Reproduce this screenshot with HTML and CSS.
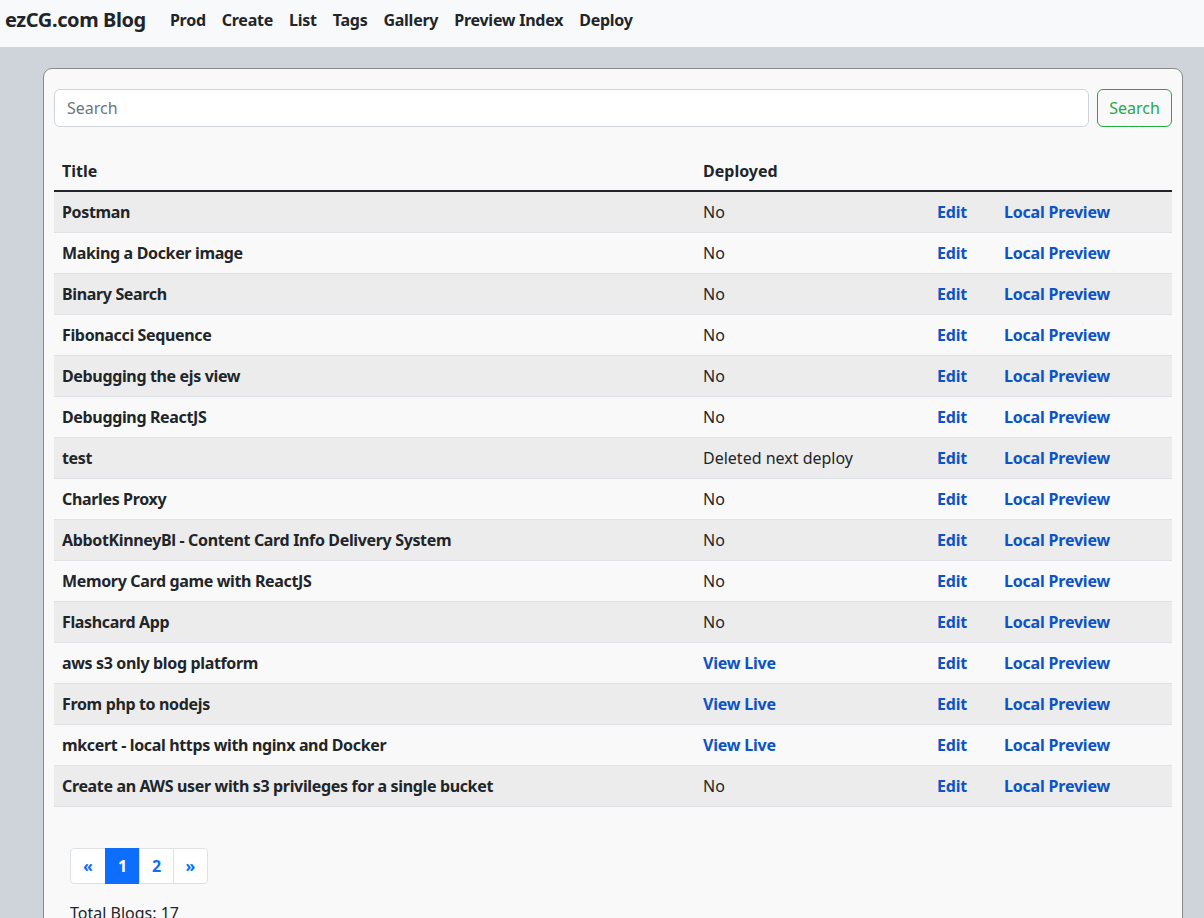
FILE: index.html
```html
<!DOCTYPE html>
<html lang="en">
<head>
<meta charset="utf-8">
<title>ezCG.com Blog</title>
<link rel="stylesheet" href="styles.css">
</head>
<body>
<nav class="navbar">
  <a class="brand" href="#">ezCG.com Blog</a>
  <ul class="nav">
    <li><a href="#">Prod</a></li>
    <li><a href="#">Create</a></li>
    <li><a href="#">List</a></li>
    <li><a href="#">Tags</a></li>
    <li><a href="#">Gallery</a></li>
    <li><a href="#">Preview Index</a></li>
    <li><a href="#">Deploy</a></li>
  </ul>
</nav>
<main class="page">
  <section class="card">
    <form class="search">
      <input class="search-input" type="text" placeholder="Search">
      <button class="search-btn" type="button">Search</button>
    </form>
    <table class="blogs">
      <colgroup>
        <col class="c-title"><col class="c-dep"><col class="c-edit"><col class="c-prev">
      </colgroup>
      <thead>
        <tr><th>Title</th><th>Deployed</th><th></th><th></th></tr>
      </thead>
      <tbody>
        <tr><td class="t">Postman</td><td>No</td><td><a href="#">Edit</a></td><td><a href="#">Local Preview</a></td></tr>
        <tr><td class="t">Making a Docker image</td><td>No</td><td><a href="#">Edit</a></td><td><a href="#">Local Preview</a></td></tr>
        <tr><td class="t">Binary Search</td><td>No</td><td><a href="#">Edit</a></td><td><a href="#">Local Preview</a></td></tr>
        <tr><td class="t">Fibonacci Sequence</td><td>No</td><td><a href="#">Edit</a></td><td><a href="#">Local Preview</a></td></tr>
        <tr><td class="t">Debugging the ejs view</td><td>No</td><td><a href="#">Edit</a></td><td><a href="#">Local Preview</a></td></tr>
        <tr><td class="t">Debugging ReactJS</td><td>No</td><td><a href="#">Edit</a></td><td><a href="#">Local Preview</a></td></tr>
        <tr><td class="t">test</td><td>Deleted next deploy</td><td><a href="#">Edit</a></td><td><a href="#">Local Preview</a></td></tr>
        <tr><td class="t">Charles Proxy</td><td>No</td><td><a href="#">Edit</a></td><td><a href="#">Local Preview</a></td></tr>
        <tr><td class="t">AbbotKinneyBl - Content Card Info Delivery System</td><td>No</td><td><a href="#">Edit</a></td><td><a href="#">Local Preview</a></td></tr>
        <tr><td class="t">Memory Card game with ReactJS</td><td>No</td><td><a href="#">Edit</a></td><td><a href="#">Local Preview</a></td></tr>
        <tr><td class="t">Flashcard App</td><td>No</td><td><a href="#">Edit</a></td><td><a href="#">Local Preview</a></td></tr>
        <tr><td class="t">aws s3 only blog platform</td><td><a href="#">View Live</a></td><td><a href="#">Edit</a></td><td><a href="#">Local Preview</a></td></tr>
        <tr><td class="t">From php to nodejs</td><td><a href="#">View Live</a></td><td><a href="#">Edit</a></td><td><a href="#">Local Preview</a></td></tr>
        <tr><td class="t">mkcert - local https with nginx and Docker</td><td><a href="#">View Live</a></td><td><a href="#">Edit</a></td><td><a href="#">Local Preview</a></td></tr>
        <tr><td class="t">Create an AWS user with s3 privileges for a single bucket</td><td>No</td><td><a href="#">Edit</a></td><td><a href="#">Local Preview</a></td></tr>
      </tbody>
    </table>
    <div class="footer">
      <ul class="pagination">
        <li><a href="#">&laquo;</a></li>
        <li class="active"><a href="#">1</a></li>
        <li><a href="#">2</a></li>
        <li><a href="#">&raquo;</a></li>
      </ul>
      <p class="total">Total Blogs: 17</p>
    </div>
  </section>
</main>
</body>
</html>
```
FILE: styles.css
```css
* { box-sizing: border-box; }
html, body { margin: 0; padding: 0; }
body {
  font-family: "Noto Sans", "Open Sans", "DejaVu Sans", sans-serif;
  font-size: 16px;
  line-height: 1.5;
  color: #212529;
  background: #ced4da;
}
a { text-decoration: none; }

.navbar {
  height: 47px;
  background: #f8f9fa;
  display: flex;
  align-items: center;
  padding: 0 0 8px 5px;
}
.brand {
  font-size: 20px;
  font-weight: 700;
  color: #212529;
  margin-right: 16px;
  letter-spacing: -0.4px;
}
.nav {
  list-style: none;
  margin: 0;
  padding: 0;
  display: flex;
}
.nav a {
  display: block;
  padding: 0 8px;
  font-weight: 700;
  color: #212529;
  letter-spacing: -0.25px;
}

.page { padding: 21px 21px 0 43px; }
.card {
  background: #f9f9f9;
  border: 1px solid #8a8a8a;
  border-radius: 9px;
  padding: 20px 10px 10px 10px;
}
.search {
  display: flex;
  gap: 8px;
  margin: 0;
}
.search-input {
  flex: 1;
  height: 38px;
  border: 1px solid #ced4da;
  border-radius: 6px;
  background: #fff;
  padding: 6px 12px;
  font: inherit;
  color: #212529;
}
.search-input::placeholder { color: #6c757d; }
.search-btn {
  height: 38px;
  width: 75px;
  padding: 0;
  border: 1px solid #28a745;
  border-radius: 6px;
  background: transparent;
  color: #28a745;
  font: inherit;
}

.blogs {
  width: 100%;
  border-collapse: collapse;
  margin-top: 23px;
  table-layout: fixed;
}
.c-title { width: 641px; }
.c-dep { width: 234px; }
.c-edit { width: 67px; }
.c-prev { width: auto; }
.blogs th {
  text-align: left;
  font-weight: 700;
  padding: 9px 8px 7px;
  border-bottom: 2px solid #212529;
  height: 40px;
}
.blogs td {
  padding: 8px 8px;
  border-bottom: 1px solid #dee2e6;
  height: 41px;
}
.blogs tbody tr:nth-child(odd) td { background: #ececec; }
.blogs td.t { font-weight: 700; letter-spacing: -0.35px; }
.blogs td a {
  color: #0b53c6;
  font-weight: 700;
  letter-spacing: -0.2px;
}

.footer { padding: 41px 16px 0; }
.pagination {
  list-style: none;
  margin: 0;
  padding: 0;
  display: flex;
}
.pagination li a {
  display: block;
  width: 35px;
  height: 36px;
  line-height: 34px;
  text-align: center;
  font-weight: 700;
  color: #0d6efd;
  background: #fff;
  border: 1px solid #dee2e6;
  margin-left: -1px;
}
.pagination li:first-child a { border-radius: 4px 0 0 4px; margin-left: 0; width: 36px; }
.pagination li:last-child a { border-radius: 0 4px 4px 0; }
.pagination li.active a { background: #0d6efd; border-color: #0d6efd; color: #fff; }
.total { margin: 17px 0 0; }
```
